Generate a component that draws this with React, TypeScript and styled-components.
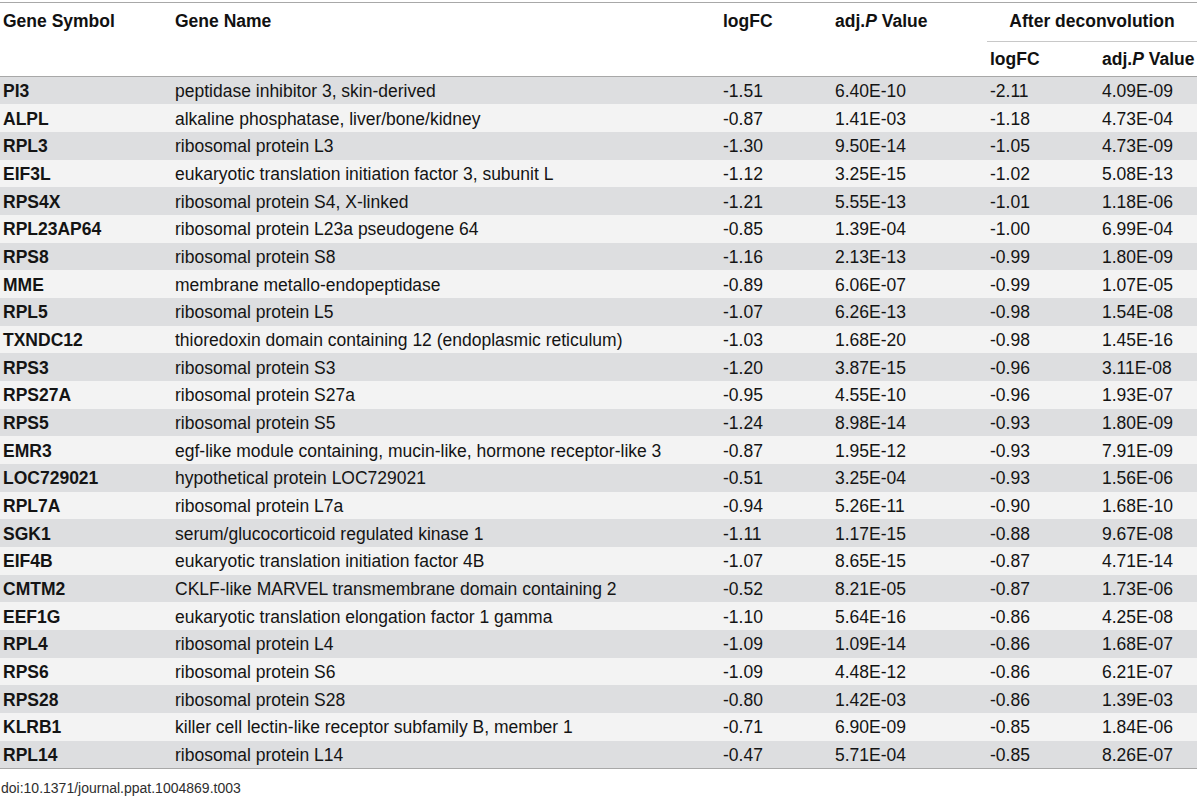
import React from 'react'
import styled, { createGlobalStyle } from 'styled-components'

const GlobalStyle = createGlobalStyle`
  body {
    margin: 0;
    background: #ffffff;
    font-family: "Liberation Sans", Arial, Helvetica, sans-serif;
    color: #111111;
  }
`

type Row = [string, string, string, string, string, string]

const rows: Row[] = [
  ['PI3', 'peptidase inhibitor 3, skin-derived', '-1.51', '6.40E-10', '-2.11', '4.09E-09'],
  ['ALPL', 'alkaline phosphatase, liver/bone/kidney', '-0.87', '1.41E-03', '-1.18', '4.73E-04'],
  ['RPL3', 'ribosomal protein L3', '-1.30', '9.50E-14', '-1.05', '4.73E-09'],
  ['EIF3L', 'eukaryotic translation initiation factor 3, subunit L', '-1.12', '3.25E-15', '-1.02', '5.08E-13'],
  ['RPS4X', 'ribosomal protein S4, X-linked', '-1.21', '5.55E-13', '-1.01', '1.18E-06'],
  ['RPL23AP64', 'ribosomal protein L23a pseudogene 64', '-0.85', '1.39E-04', '-1.00', '6.99E-04'],
  ['RPS8', 'ribosomal protein S8', '-1.16', '2.13E-13', '-0.99', '1.80E-09'],
  ['MME', 'membrane metallo-endopeptidase', '-0.89', '6.06E-07', '-0.99', '1.07E-05'],
  ['RPL5', 'ribosomal protein L5', '-1.07', '6.26E-13', '-0.98', '1.54E-08'],
  ['TXNDC12', 'thioredoxin domain containing 12 (endoplasmic reticulum)', '-1.03', '1.68E-20', '-0.98', '1.45E-16'],
  ['RPS3', 'ribosomal protein S3', '-1.20', '3.87E-15', '-0.96', '3.11E-08'],
  ['RPS27A', 'ribosomal protein S27a', '-0.95', '4.55E-10', '-0.96', '1.93E-07'],
  ['RPS5', 'ribosomal protein S5', '-1.24', '8.98E-14', '-0.93', '1.80E-09'],
  ['EMR3', 'egf-like module containing, mucin-like, hormone receptor-like 3', '-0.87', '1.95E-12', '-0.93', '7.91E-09'],
  ['LOC729021', 'hypothetical protein LOC729021', '-0.51', '3.25E-04', '-0.93', '1.56E-06'],
  ['RPL7A', 'ribosomal protein L7a', '-0.94', '5.26E-11', '-0.90', '1.68E-10'],
  ['SGK1', 'serum/glucocorticoid regulated kinase 1', '-1.11', '1.17E-15', '-0.88', '9.67E-08'],
  ['EIF4B', 'eukaryotic translation initiation factor 4B', '-1.07', '8.65E-15', '-0.87', '4.71E-14'],
  ['CMTM2', 'CKLF-like MARVEL transmembrane domain containing 2', '-0.52', '8.21E-05', '-0.87', '1.73E-06'],
  ['EEF1G', 'eukaryotic translation elongation factor 1 gamma', '-1.10', '5.64E-16', '-0.86', '4.25E-08'],
  ['RPL4', 'ribosomal protein L4', '-1.09', '1.09E-14', '-0.86', '1.68E-07'],
  ['RPS6', 'ribosomal protein S6', '-1.09', '4.48E-12', '-0.86', '6.21E-07'],
  ['RPS28', 'ribosomal protein S28', '-0.80', '1.42E-03', '-0.86', '1.39E-03'],
  ['KLRB1', 'killer cell lectin-like receptor subfamily B, member 1', '-0.71', '6.90E-09', '-0.85', '1.84E-06'],
  ['RPL14', 'ribosomal protein L14', '-0.47', '5.71E-04', '-0.85', '8.26E-07'],
]

const colWidths = [172, 548, 112, 155, 112, 98]

const Page = styled.div`
  width: 1197px;
  padding-top: 2px;
`

const Table = styled.table`
  width: 1197px;
  table-layout: fixed;
  border-collapse: collapse;
  border-top: 1px solid #a8a8a8;
  border-bottom: 1px solid #a8a8a8;
  font-size: 17.5px;
  line-height: 20px;
`

const HeadCell = styled.th<{ $top?: boolean; $center?: boolean; $rule?: boolean; $h: number }>`
  height: ${(p) => p.$h}px;
  padding: ${(p) => (p.$top ? '8px 3px 0' : '0 3px')};
  box-sizing: border-box;
  vertical-align: ${(p) => (p.$top ? 'top' : 'middle')};
  text-align: ${(p) => (p.$center ? 'center' : 'left')};
  font-weight: bold;
  white-space: nowrap;
  color: #111111;
  border-bottom: ${(p) => (p.$rule ? '1px solid #c8c8c8' : 'none')};
`

const HeadRow = styled.tr`
  &:last-child th,
  & th[rowspan] {
    border-bottom: 1px solid #a8a8a8;
  }
`

const BodyRow = styled.tr<{ $odd: boolean }>`
  height: 27.68px;
  background: ${(p) => (p.$odd ? '#f3f3f3' : '#dddee0')};
`

const Cell = styled.td<{ $bold?: boolean }>`
  padding: 1px 3px 0;
  vertical-align: middle;
  white-space: nowrap;
  font-weight: ${(p) => (p.$bold ? 'bold' : 'normal')};
  color: #141414;
`

const Doi = styled.div`
  margin-top: 11px;
  padding-left: 1px;
  font-size: 14px;
  line-height: 17px;
  color: #2e2e2e;
`

const PValue = () => (
  <>
    adj.<i>P</i> Value
  </>
)

export default function App() {
  return (
    <Page>
      <GlobalStyle />
      <Table>
        <colgroup>
          {colWidths.map((w, i) => (
            <col key={i} style={{ width: w }} />
          ))}
        </colgroup>
        <thead>
          <HeadRow>
            <HeadCell rowSpan={2} $top $h={74}>Gene Symbol</HeadCell>
            <HeadCell rowSpan={2} $top $h={74}>Gene Name</HeadCell>
            <HeadCell rowSpan={2} $top $h={74}>logFC</HeadCell>
            <HeadCell rowSpan={2} $top $h={74}><PValue /></HeadCell>
            <HeadCell colSpan={2} $top $center $rule $h={39}>After deconvolution</HeadCell>
          </HeadRow>
          <HeadRow>
            <HeadCell $h={35}>logFC</HeadCell>
            <HeadCell $h={35}><PValue /></HeadCell>
          </HeadRow>
        </thead>
        <tbody>
          {rows.map((r, i) => (
            <BodyRow key={r[0]} $odd={i % 2 === 1}>
              {r.map((v, j) => (
                <Cell key={j} $bold={j === 0}>{v}</Cell>
              ))}
            </BodyRow>
          ))}
        </tbody>
      </Table>
      <Doi>doi:10.1371/journal.ppat.1004869.t003</Doi>
    </Page>
  )
}
